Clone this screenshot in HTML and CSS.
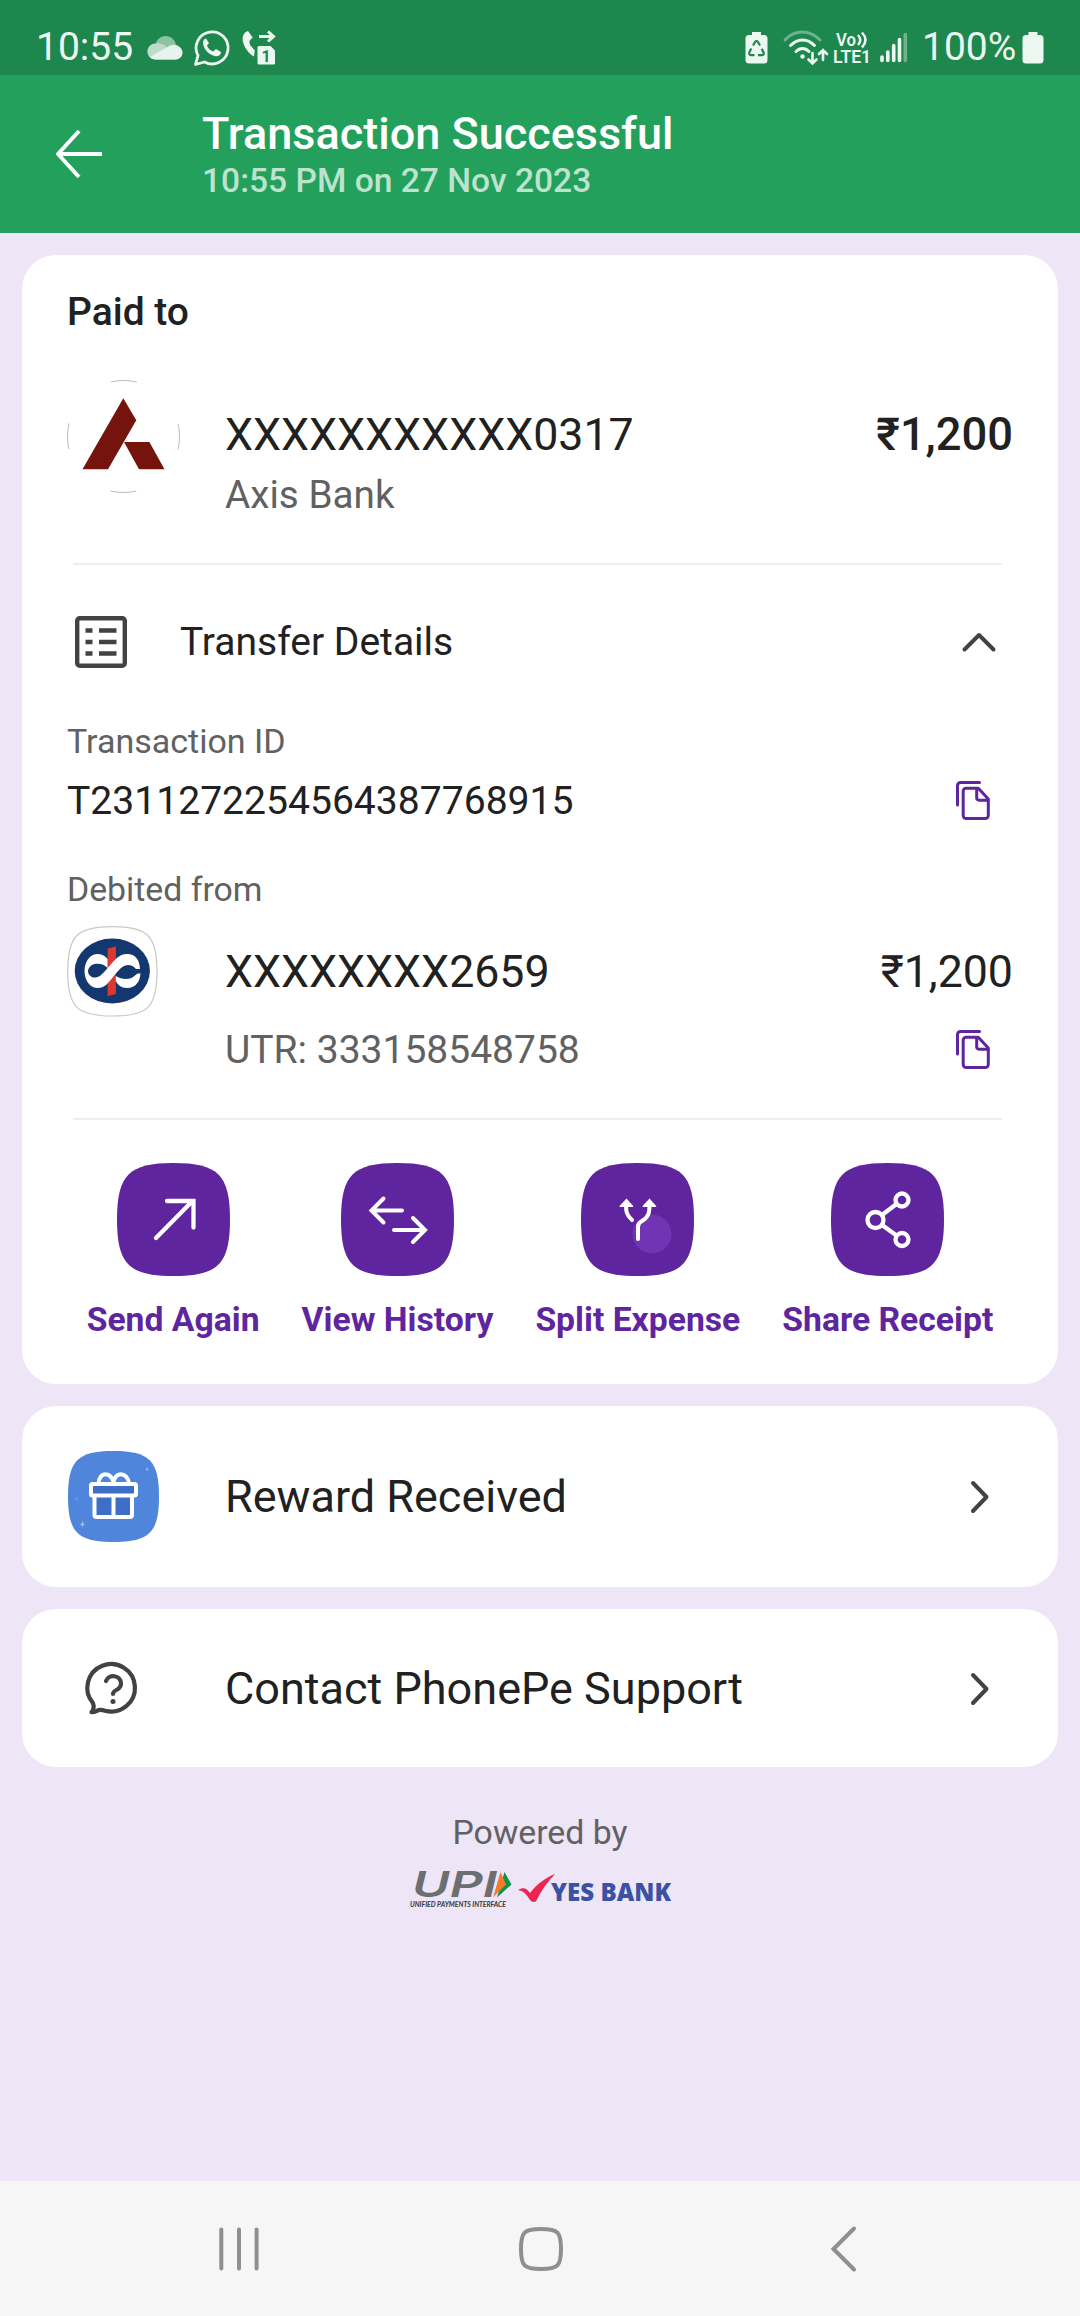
FILE: index.html
```html
<!DOCTYPE html>
<html lang="en">
<head>
<meta charset="utf-8">
<title>Transaction Successful</title>
<link rel="stylesheet" href="styles.css">
</head>
<body>
<svg width="0" height="0" class="defs" aria-hidden="true">
  <defs>
    <symbol id="squircle" viewBox="0 0 113 113"><path d="M0 56.5C0 12 12 0 56.5 0S113 12 113 56.5 101 113 56.5 113 0 101 0 56.5z"/></symbol>
    <symbol id="copy" viewBox="0 0 34 40"><g fill="none" stroke="#5f259f" stroke-width="3" stroke-linejoin="round" stroke-linecap="round"><path d="M1.500 24V4.500a3 3 0 0 1 3-3H23.500"/><path d="M10 7.200h12.300L32.300 18v16.500a3 3 0 0 1-3 3H10.200a3 3 0 0 1-3-3V10a2.800 2.800 0 0 1 2.800-2.800z"/><path d="M20.700 7.500v9.500a2.200 2.200 0 0 0 2.200 2.200h9"/></g></symbol>
    <symbol id="next" viewBox="0 0 20 34"><path d="M3 3L16.500 17 3 31" fill="none" stroke="#424242" stroke-width="4" stroke-linecap="round" stroke-linejoin="round"/></symbol>
  </defs>
</svg>

<div class="status">
  <span class="clock">10:55</span>
  <svg class="cloud" width="36" height="24" viewBox="0 0 36 24"><path d="M8 9C10 3 14 0 18.500 0c5 0 9 3 10.500 8.500L14 17z" fill="#8cc3a5"/><path d="M8 23.500A7.900 7.900 0 0 1 8.500 7.600C13 6 17 9 20 11L32 20 30 23.500z" fill="#bbdcc9"/><path d="M3 21L23 9.500c5-2.500 12.500 1 12.500 7 0 4-3 7-7 7H8c-2 0-4-1-5-2.500z" fill="#e8f3ed"/></svg>
  <svg class="whats" width="36" height="37" viewBox="0 0 36 37"><path d="M1.500 35.500l2.500-9A16 16 0 1 1 10.500 33z" fill="none" stroke="#edf7f1" stroke-width="2.800" stroke-linejoin="round"/><path d="M12 9.500c-2 .3-3.300 2.300-3 5 .8 6 6 11.500 12.500 12.700 3 .5 5.500-1.500 5.500-4.200l-5-3-2.800 2.600c-3-1-5.200-3.200-6.200-6l2-2.600z" fill="#edf7f1"/></svg>
  <svg class="fwd" width="34" height="35" viewBox="0 0 34 35"><path d="M6 1C1 3 0 7 1 12c1.600 6 6 12 11 14.500l.8-6-4.300-5c-1-2-1.200-3-.8-5l3-3z" fill="#edf7f1"/><path d="M17 6.500h14M26 1.500l5.500 5-5.500 5" fill="none" stroke="#edf7f1" stroke-width="3"/><path d="M15.500 17.500a1.500 1.500 0 0 1 1.500-1.500h11.500l4.500 4.500V33a1.500 1.500 0 0 1-1.500 1.500H17a1.500 1.500 0 0 1-1.500-1.500z" fill="#edf7f1"/><text x="19.600" y="31.500" class="sim">1</text></svg>
  <svg class="saver" width="23" height="33" viewBox="0 0 23 33"><path d="M7 1h9v3h3a3.500 3.500 0 0 1 3.500 3.500V29a3.500 3.500 0 0 1-3.500 3.500H4A3.500 3.500 0 0 1 .5 29V7.500A3.500 3.500 0 0 1 4 4h3z" fill="#edf7f1"/><g fill="none" stroke="#1d874d" stroke-width="2.200"><path d="M8 14.500l2-3.500q1.500-2 3 0l2 3.500"/><path d="M6.300 17.500L4.500 21q-1 3 1.500 3.200h3.500"/><path d="M13 24.200h4q2.500-.4 1.500-3l-1.800-3.500"/></g></svg>
  <svg class="wifi" width="46" height="35" viewBox="0 0 46 35"><g fill="none" stroke="#edf7f1" stroke-width="3" stroke-linecap="round"><path d="M2 10C11-.8 27-.8 37 10" stroke="#6fb38e"/><path d="M7.500 15.500c7-7.500 17-7.500 24 0"/><path d="M13 21.500c4-4 9-4 13 0"/><path d="M29.500 23v10M25.500 29.500l4 4 4-4M40 30V20M36 24l4-4 4 4" stroke-width="2.600"/></g><circle cx="19.500" cy="26.500" r="2.200" fill="#edf7f1"/></svg>
  <svg class="volte" width="38" height="34" viewBox="0 0 38 34"><text x="3" y="14.500" textLength="20" lengthAdjust="spacingAndGlyphs">Vo</text><text x="0" y="31.500" textLength="38" lengthAdjust="spacingAndGlyphs">LTE1</text><path d="M25 4q4.500 5 0 10M29 1.500q7 7.500 0 15" fill="none" stroke="#edf7f1" stroke-width="2.500"/></svg>
  <svg class="signal" width="28" height="31" viewBox="0 0 28 31"><g stroke="#edf7f1" stroke-width="3.600" stroke-linecap="round"><path d="M2 25v3.500M7.800 20v8.500M13.700 13.500v15M19.500 7.500v21"/><path d="M25.300 2.500v26" stroke="#6fb38e"/></g></svg>
  <span class="pct">100%</span>
  <svg class="batt" width="22" height="33" viewBox="0 0 22 33"><path d="M6.500 1h9v3H18a3.500 3.500 0 0 1 3.500 3.500V29a3.500 3.500 0 0 1-3.500 3.500H4A3.500 3.500 0 0 1 .5 29V7.500A3.500 3.500 0 0 1 4 4h2.500z" fill="#edf7f1"/></svg>
</div>

<header class="header">
  <svg width="48" height="52" viewBox="0 0 48 52"><path d="M24 3L3 26l21 23M3.500 26H47" fill="none" stroke="#fff" stroke-width="4" stroke-linejoin="round"/></svg>
  <div>
    <h1 class="title">Transaction Successful</h1>
    <p class="subtitle">10:55 PM on 27 Nov 2023</p>
  </div>
</header>

<main class="main">
  <section class="card payment">
    <h2 class="paid-to">Paid to</h2>
    <div class="payee">
      <svg class="avatar" width="113" height="113" viewBox="0 0 113 113"><circle cx="56.500" cy="56.500" r="56" fill="none" stroke="#bbb" stroke-width="1" stroke-dasharray="26 61.960" stroke-dashoffset="13"/><path d="M56.300 18.300L69.300 40.300 41 89.300H15.500zM57 62h25.400L97.500 89.300H72z" fill="#75140c"/></svg>
      <div class="payee-text">
        <div class="name">XXXXXXXXXXX0317</div>
        <div class="bank">Axis Bank</div>
      </div>
      <div class="amount strong">₹1,200</div>
    </div>
    <hr class="rule">
    <div class="details">
      <svg width="52" height="52" viewBox="0 0 52 52"><g fill="none" stroke="#424242" stroke-width="4.400"><rect x="2.200" y="2.200" width="47.600" height="47.600" rx="2.500"/><path d="M10.500 14.500h7M24 14.500h17.500M10.500 26h7M24 26h17.500M10.500 37.500h7M24 37.500h17.500"/></g></svg>
      <span class="details-title">Transfer Details</span>
      <svg class="up" width="34" height="20" viewBox="0 0 34 20"><path d="M2.500 17.500L17 3 31.500 17.500" fill="none" stroke="#424242" stroke-width="4" stroke-linecap="round" stroke-linejoin="round"/></svg>
    </div>
    <div class="label txn">Transaction ID</div>
    <div class="copy-row txn-row"><span class="dark">T2311272254564387768915</span><svg width="34" height="40"><use href="#copy"/></svg></div>
    <div class="label debit">Debited from</div>
    <div class="source">
      <svg width="91" height="91" viewBox="0 0 91 91"><path d="M.7 45.500C.7 10 10 .7 45.500.7S90 10 90 45.500 81 90 45.500 90 .7 81 .7 45.500z" fill="#fff" stroke="#c9c9c9" stroke-width="1.200"/><ellipse cx="45.300" cy="45" rx="37.600" ry="32.600" fill="#13376f"/><path d="M40.600 22.700l8.300-2.400V68l-8.300 2.300z" fill="#db3832"/><path d="M40.600 33C36 27 27 26 22 32c-6 7-6 19 0 26 5 6 14 5 19-1 8-9 13-18 20-18 5 0 7 3 8 4h4c0-6-3-15-12-15-9-.5-13 6-20.400 14z" fill="#fff"/><path d="M40.600 42C37 38.500 34 37.300 29 37.800c-4 .2-7.500 3.200-8 7.200.2 4.500 4 7.200 8 6.500 4-.6 8-5 11.600-9.500z" fill="#13376f"/><path d="M48.800 50c6 4 15 4 18.500 0l3.200-2.500h3C73 55 69 62 60 62c-6 0-9-3-11.200-7z" fill="#fff"/></svg>
      <div class="name">XXXXXXXX2659</div>
      <div class="amount">₹1,200</div>
    </div>
    <div class="copy-row utr-row"><span class="bank">UTR: 333158548758</span><svg width="34" height="40"><use href="#copy"/></svg></div>
    <hr class="rule second">
    <div class="actions">
      <div class="action"><svg width="113" height="113" viewBox="0 0 113 113"><use href="#squircle" fill="#5f259f"/><path d="M39 75L75.500 38M50 38h26.500v26.500" fill="none" stroke="#fff" stroke-width="4.300" stroke-linecap="round"/></svg><span>Send Again</span></div>
      <div class="action"><svg width="113" height="113" viewBox="0 0 113 113"><use href="#squircle" fill="#5f259f"/><path d="M42.500 35.500L30.500 47.500l12 12M31 47.500h30M72 55l12 12-12 12M83 67H53" fill="none" stroke="#fff" stroke-width="4" stroke-linecap="round"/></svg><span>View History</span></div>
      <div class="action"><svg width="113" height="113" viewBox="0 0 113 113"><use href="#squircle" fill="#5f259f"/><circle cx="71" cy="71" r="19.500" fill="#7134b2"/><g fill="none" stroke="#fff" stroke-width="4" stroke-linecap="round"><path d="M57 76V64q0-4 4-6c7-4 7.500-9 7.500-16M51 57c-6-5-6-10-6-15"/></g><path d="M45.500 35.500l-7 7.500q0 1 1 1h12q1.300 0 .7-1zM68.500 35.500l-7 7.500q0 1 1 1h12q1.300 0 .7-1z" fill="#fff"/></svg><span>Split Expense</span></div>
      <div class="action"><svg width="113" height="113" viewBox="0 0 113 113"><use href="#squircle" fill="#5f259f"/><g fill="none" stroke="#fff" stroke-width="4.300"><circle cx="44.500" cy="57" r="8"/><circle cx="71" cy="37" r="6.500"/><circle cx="71" cy="76.500" r="6.500"/><path d="M51 52l14.500-11M51 62l14.500 10.500"/></g></svg><span>Share Receipt</span></div>
    </div>
  </section>

  <section class="card link reward">
    <svg class="link-icon" width="91" height="91" viewBox="0 0 91 91"><use href="#squircle" fill="#4f86db"/><path d="M24 32h43v13H24zM28 46h35v20H28z" fill="#3e6fc6"/><g fill="none" stroke="#fff" stroke-width="4"><rect x="23" y="33" width="45" height="11.500" rx="1.500"/><path d="M26.500 45v19a2 2 0 0 0 2 2H62a2 2 0 0 0 2-2V45M45.500 45v21M30.500 33c0-13 14-13 15 0M45.500 33c0-13 14.500-13 15.500 0"/></g><path d="M14.500 70l1 2.500 2 .8-2 .8-1 2.500-1-2.500-2-.8 2-.8zM79 16l.6 1.600 1.400.6-1.400.6L79 20.400l-.6-1.600-1.400-.6 1.400-.6z" fill="#9bbcee"/><circle cx="8.500" cy="47.500" r="1.500" fill="#6799e2"/></svg>
    <span class="name">Reward Received</span>
    <svg class="next" width="20" height="34"><use href="#next"/></svg>
  </section>

  <section class="card link support">
    <svg class="link-icon" width="91" height="52" viewBox="0 0 91 52"><g fill="none" stroke="#424242" stroke-width="4.200" stroke-linecap="round" stroke-linejoin="round"><path d="M22.500 49.200c2.800-3.300 2.500-6.200 1.500-9A23.800 23.800 0 1 1 36 47.800c-4-1.600-5.500-1.500-8 0-1.800 1-3.400 1.400-5.500 1.400z"/><path d="M37 18c2.500-7.500 15-6 15 2.500 0 7.500-8 5.500-8 10.500"/></g><circle cx="44" cy="38.500" r="2.500" fill="#424242"/></svg>
    <span class="name">Contact PhonePe Support</span>
    <svg class="next" width="20" height="34"><use href="#next"/></svg>
  </section>

  <footer class="powered">
    <p>Powered by</p>
    <div class="brands">
      <svg width="102" height="40" viewBox="0 0 102 40"><text class="upi" x="2" y="27" textLength="85" lengthAdjust="spacingAndGlyphs">UPI</text><path d="M94.500 2l7 12.500L87 27.500z" fill="#12914a"/><path d="M90.500 2l5.500 12.500L83 27.500z" fill="#f47b2a"/><text class="tag" x="0" y="37" textLength="96" lengthAdjust="spacingAndGlyphs">UNIFIED PAYMENTS INTERFACE</text></svg>
      <svg width="154" height="40" viewBox="0 0 154 40"><path d="M0 20c5-3 9-2 12 3C19 14 27 8 37 4 29 12 23 21 18.500 30.500c-2 2.300-4.500 1.800-6.500-.5-3-5-6-9-12-10z" fill="#ee2551"/><text class="yes" x="33" y="31" textLength="120" lengthAdjust="spacingAndGlyphs">YES BANK</text></svg>
    </div>
  </footer>
</main>

<nav class="nav">
  <svg width="44" height="46" viewBox="0 0 44 46"><path d="M4.300 3.500v39M22 3.500v39M39.600 3.500v39" stroke="#8f8f8f" stroke-width="4" stroke-linecap="round"/></svg>
  <svg width="46" height="46" viewBox="0 0 46 46"><path d="M3 23C3 6 6 3 23 3s20 3 20 20-3 20-20 20S3 40 3 23z" fill="none" stroke="#8f8f8f" stroke-width="4"/></svg>
  <svg width="44" height="48" viewBox="0 0 44 48"><path d="M33 3.500L12.500 24 33 44.500" fill="none" stroke="#8f8f8f" stroke-width="4" stroke-linecap="round"/></svg>
</nav>
</body>
</html>
```
FILE: styles.css
```css
* { box-sizing: border-box; margin: 0; padding: 0; }

body {
  width: 1080px;
  height: 2316px;
  display: flex;
  flex-direction: column;
  background: #eee5f6;
  color: #212121;
  font-family: Roboto, "Liberation Sans", sans-serif;
  overflow: hidden;
}

svg { display: block; flex: none; overflow: visible; }
.defs { display: none; }

/* Status bar */
.status {
  height: 75px;
  flex: none;
  display: flex;
  align-items: flex-start;
  padding: 0 36px;
  background: #1d874d;
  color: #edf7f1;
}
.clock, .pct { margin-top: 24px; font-size: 39px; line-height: 46px; }
.clock { width: 98px; }
.cloud { margin: 36px 0 0 13px; }
.whats { margin: 29px 0 0 11px; }
.fwd { margin: 30px 0 0 12px; }
.sim { font: 700 16px Roboto, sans-serif; fill: #1d874d; }
.saver { margin: 31px 0 0 auto; }
.wifi { margin: 30px 0 0 15px; }
.volte { margin: 31px 0 0 4px; fill: #edf7f1; font-size: 18px; font-weight: 600; }
.signal { margin: 32px 0 0 9px; }
.pct { width: 94px; margin-left: 14px; }
.batt { margin: 31px 0 0 6px; }

/* Header */
.header {
  height: 158px;
  flex: none;
  display: flex;
  align-items: center;
  gap: 99px;
  padding-left: 55px;
  background: #23a15c;
  color: #fff;
}
.title { font-size: 45px; font-weight: 500; line-height: 54px; }
.subtitle { margin-bottom: 1px; font-size: 33.600px; font-weight: 500; line-height: 39px; color: #bde3ce; }

/* Cards */
.main {
  flex: 1;
  display: flex;
  flex-direction: column;
  gap: 22px;
  padding: 22px 22px 0;
}
.card { background: #fff; border-radius: 34px; }
.payment { height: 1129px; padding: 34px 45px 0; }
.paid-to { font-size: 39px; font-weight: 500; line-height: 46px; }
.name { font-size: 45px; line-height: 54px; }
.payment .name { font-size: 44.700px; }
.bank { font-size: 39px; line-height: 46px; color: #616161; }
.dark { font-size: 39.100px; line-height: 46px; }
.amount { margin-left: auto; font-size: 45px; line-height: 54px; }
.strong { font-size: 45.300px; font-weight: 500; }

.payee { display: flex; align-items: flex-start; margin-top: 45px; height: 137px; }
.payee-text { margin-left: 45px; padding-top: 28px; }
.payee-text .bank { margin-top: 10px; font-size: 38.700px; }
.payee .amount { margin-top: 28px; }

.rule { height: 2px; border: 0; background: #eee; margin: 46px 11px 0 6px; }
.second { margin-top: 45px; }

.details { display: flex; align-items: center; height: 52px; margin-top: 51px; padding: 0 17px 0 8px; }
.details-title { margin-left: 53px; font-size: 39px; }
.up { margin-left: auto; }

.label { font-size: 34px; line-height: 40px; color: #616161; }
.txn { margin-top: 53px; }
.debit { margin-top: 46px; font-size: 33.800px; }
.copy-row { display: flex; align-items: center; justify-content: space-between; height: 46px; padding-right: 23px; }
.txn-row { margin-top: 17px; }
.source { display: flex; align-items: center; height: 91px; margin-top: 16px; }
.source .name { margin-left: 67px; }
.source .amount { font-size: 44.700px; }
.utr-row { margin-top: 10px; padding-left: 158px; }

.actions { display: flex; justify-content: center; gap: 42px; margin-top: 43px; }
.action {
  display: flex;
  flex-direction: column;
  align-items: center;
  gap: 24px;
  color: #5f259f;
  font-size: 33.700px;
  font-weight: 700;
  line-height: 40px;
  white-space: nowrap;
}

.link { display: flex; align-items: center; padding: 0 68px 0 46px; }
.reward { height: 181px; }
.support { height: 158px; padding-top: 1px; }
.link .name { margin-left: 66px; }
.support .link-icon { margin-left: 1px; }
.support .name { margin-left: 65px; }
.next { margin-left: auto; }

/* Footer brands */
.powered { display: flex; flex-direction: column; align-items: center; margin-top: 24px; color: #616161; font-size: 33.800px; line-height: 40px; }
.brands { display: flex; gap: 6px; margin-top: 17px; margin-left: 2px; }
.upi { font: italic 600 36px Inter, "Liberation Sans", sans-serif; fill: #6d6e71; }
.tag { font: italic 700 7.500px Lato, sans-serif; fill: #333; }
.yes { font: 800 25px "Open Sans", sans-serif; fill: #3b52a3; }

/* System navigation */
.nav {
  height: 135px;
  flex: none;
  display: flex;
  align-items: center;
  justify-content: space-between;
  padding: 0 215px 0 217px;
  background: #f6f6f6;
}
```
